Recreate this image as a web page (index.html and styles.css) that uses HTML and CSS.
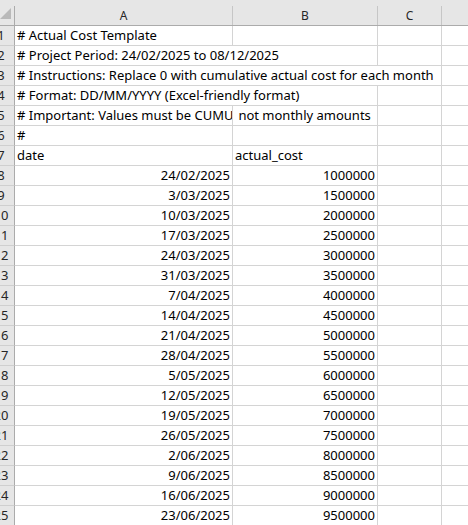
FILE: index.html
```html
<!DOCTYPE html>
<html lang="en">
<head>
<meta charset="utf-8">
<title>Actual Cost Template</title>
<link rel="stylesheet" href="styles.css">
</head>
<body>
<div class="sheet">
  <div class="hd corner"><span><svg width="14" height="19" viewBox="0 0 14 19"><polygon points="0,13 11,13 11,2" fill="#b9b9b9"/></svg></span></div>
  <div class="hd"><span>A</span></div>
  <div class="hd"><span>B</span></div>
  <div class="hd"><span>C</span></div>
  <div class="hd last"><span></span></div>

  <div class="rh"><span>1</span></div>
  <div class="c"># Actual Cost Template</div><div class="c"></div><div class="c"></div><div class="c last"></div>

  <div class="rh"><span>2</span></div>
  <div class="c span2"># Project Period: 24/02/2025 to 08/12/2025</div><div class="c"></div><div class="c last"></div>

  <div class="rh"><span>3</span></div>
  <div class="c span3"># Instructions: Replace 0 with cumulative actual cost for each month</div><div class="c last"></div>

  <div class="rh"><span>4</span></div>
  <div class="c span2"># Format: DD/MM/YYYY (Excel-friendly format)</div><div class="c"></div><div class="c last"></div>

  <div class="rh"><span>5</span></div>
  <div class="c clip"># Important: Values must be CUMULATIVE</div><div class="c"> not monthly amounts</div><div class="c"></div><div class="c last"></div>

  <div class="rh"><span>6</span></div>
  <div class="c">#</div><div class="c"></div><div class="c"></div><div class="c last"></div>

  <div class="rh"><span>7</span></div>
  <div class="c">date</div><div class="c">actual_cost</div><div class="c"></div><div class="c last"></div>

  <div class="rh"><span>8</span></div>
  <div class="c num">24/02/2025</div><div class="c num">1000000</div><div class="c"></div><div class="c last"></div>
  <div class="rh"><span>9</span></div>
  <div class="c num">3/03/2025</div><div class="c num">1500000</div><div class="c"></div><div class="c last"></div>
  <div class="rh"><span>10</span></div>
  <div class="c num">10/03/2025</div><div class="c num">2000000</div><div class="c"></div><div class="c last"></div>
  <div class="rh"><span>11</span></div>
  <div class="c num">17/03/2025</div><div class="c num">2500000</div><div class="c"></div><div class="c last"></div>
  <div class="rh"><span>12</span></div>
  <div class="c num">24/03/2025</div><div class="c num">3000000</div><div class="c"></div><div class="c last"></div>
  <div class="rh"><span>13</span></div>
  <div class="c num">31/03/2025</div><div class="c num">3500000</div><div class="c"></div><div class="c last"></div>
  <div class="rh"><span>14</span></div>
  <div class="c num">7/04/2025</div><div class="c num">4000000</div><div class="c"></div><div class="c last"></div>
  <div class="rh"><span>15</span></div>
  <div class="c num">14/04/2025</div><div class="c num">4500000</div><div class="c"></div><div class="c last"></div>
  <div class="rh"><span>16</span></div>
  <div class="c num">21/04/2025</div><div class="c num">5000000</div><div class="c"></div><div class="c last"></div>
  <div class="rh"><span>17</span></div>
  <div class="c num">28/04/2025</div><div class="c num">5500000</div><div class="c"></div><div class="c last"></div>
  <div class="rh"><span>18</span></div>
  <div class="c num">5/05/2025</div><div class="c num">6000000</div><div class="c"></div><div class="c last"></div>
  <div class="rh"><span>19</span></div>
  <div class="c num">12/05/2025</div><div class="c num">6500000</div><div class="c"></div><div class="c last"></div>
  <div class="rh"><span>20</span></div>
  <div class="c num">19/05/2025</div><div class="c num">7000000</div><div class="c"></div><div class="c last"></div>
  <div class="rh"><span>21</span></div>
  <div class="c num">26/05/2025</div><div class="c num">7500000</div><div class="c"></div><div class="c last"></div>
  <div class="rh"><span>22</span></div>
  <div class="c num">2/06/2025</div><div class="c num">8000000</div><div class="c"></div><div class="c last"></div>
  <div class="rh"><span>23</span></div>
  <div class="c num">9/06/2025</div><div class="c num">8500000</div><div class="c"></div><div class="c last"></div>
  <div class="rh"><span>24</span></div>
  <div class="c num">16/06/2025</div><div class="c num">9000000</div><div class="c"></div><div class="c last"></div>
  <div class="rh"><span>25</span></div>
  <div class="c num">23/06/2025</div><div class="c num">9500000</div><div class="c"></div><div class="c last"></div>
</div>
</body>
</html>
```
FILE: styles.css
```css
* { box-sizing: border-box; }
html, body {
  margin: 0;
  height: 525px;
  overflow: hidden;
  background: #ffffff;
}
.sheet {
  display: grid;
  grid-template-columns: 15px 218px 145px 64px 1fr;
  grid-template-rows: 26px repeat(25, 20px);
  font: 13px/19px "Noto Sans", "Open Sans", sans-serif;
  color: #000000;
}
.hd {
  background: #e6e6e6;
  border-bottom: 1px solid #ababab;
  padding-top: 6px;
}
.hd span {
  display: block;
  height: 19px;
  border-right: 1px solid #c6c6c6;
  text-align: center;
  font-size: 12px;
  line-height: 19px;
  color: #262626;
}
.hd.corner span { border-right-color: #ababab; }
.hd.corner svg { display: block; }
.hd.last span { border-right: none; }
.rh {
  background: #e6e6e6;
  border-right: 1px solid #ababab;
  border-bottom: 1px solid #cfcfcf;
  overflow: hidden;
  color: #262626;
}
.rh span {
  display: block;
  width: 28px;
  margin-left: -13px;
  text-align: center;
}
.c {
  border-right: 1px solid #d4d4d4;
  border-bottom: 1px solid #d4d4d4;
  padding: 0 2px;
  white-space: pre;
  overflow: hidden;
}
.c.clip { text-overflow: clip; }
.c.num { text-align: right; }
.c.last { border-right: none; }
.c.span2 { grid-column: span 2; }
.c.span3 { grid-column: span 3; }
```
